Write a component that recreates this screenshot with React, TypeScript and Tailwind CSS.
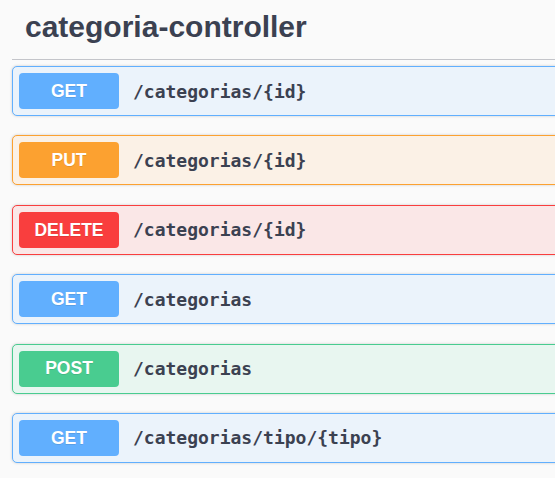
const ops = [
  { method: "GET", path: "/categorias/{id}", badge: "bg-[#61affe]", block: "bg-[#ebf3fb] border-[#61affe]" },
  { method: "PUT", path: "/categorias/{id}", badge: "bg-[#fca130]", block: "bg-[#fbf1e6] border-[#fca130]" },
  { method: "DELETE", path: "/categorias/{id}", badge: "bg-[#f93e3e]", block: "bg-[#fae7e7] border-[#f93e3e]" },
  { method: "GET", path: "/categorias", badge: "bg-[#61affe]", block: "bg-[#ebf3fb] border-[#61affe]" },
  { method: "POST", path: "/categorias", badge: "bg-[#49cc90]", block: "bg-[#e8f6f0] border-[#49cc90]" },
  { method: "GET", path: "/categorias/tipo/{tipo}", badge: "bg-[#61affe]", block: "bg-[#ebf3fb] border-[#61affe]" },
];

export default function App() {
  return (
    <div className="w-[555px] h-[478px] overflow-hidden bg-[#fafafa] text-[#3b4151]">
      <div className="ml-[12px] w-[600px]">
        <h4
          className="pt-[12px] pb-[17px] pl-[13px] leading-[30px] text-[30px] font-bold border-b border-[#c4c5ca]"
          style={{ fontFamily: '"Liberation Sans", Arial, sans-serif' }}
        >
          categoria-controller
        </h4>
        <div className="mt-[6px] flex flex-col gap-[19.4px]">
          {ops.map((op, i) => (
            <div
              key={i}
              className={`h-[50px] flex items-center pl-[6px] border rounded-[5px] shadow-[0_0_3px_rgba(0,0,0,0.19)] ${op.block}`}
            >
              <span
                className={`w-[100px] h-[36px] flex items-center justify-center rounded-[4px] text-white font-bold text-[17.5px] [text-shadow:0_1px_0_rgba(0,0,0,0.1)] ${op.badge}`}
                style={{ fontFamily: '"Liberation Sans", Arial, sans-serif' }}
              >
                {op.method}
              </span>
              <span
                className="ml-[14px] text-[18px] font-bold text-[#3b4151]"
                style={{ fontFamily: '"DejaVu Sans Mono", monospace' }}
              >
                {op.path}
              </span>
            </div>
          ))}
        </div>
      </div>
    </div>
  );
}
